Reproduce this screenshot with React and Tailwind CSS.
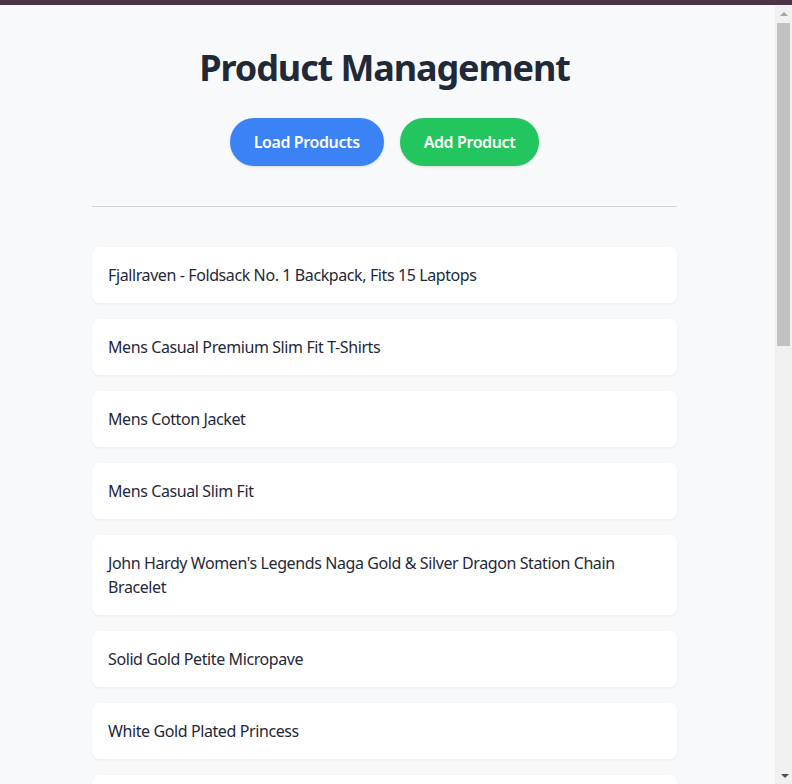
const products = [
  "Fjallraven - Foldsack No. 1 Backpack, Fits 15 Laptops",
  "Mens Casual Premium Slim Fit T-Shirts",
  "Mens Cotton Jacket",
  "Mens Casual Slim Fit",
  "John Hardy Women's Legends Naga Gold & Silver Dragon Station Chain Bracelet",
  "Solid Gold Petite Micropave",
  "White Gold Plated Princess",
  "Pierced Owl Rose Gold Plated Stainless Steel Double",
  "WD 2TB Elements Portable External Hard Drive - USB 3.0",
  "SanDisk SSD PLUS 1TB Internal SSD - SATA III 6 Gb/s",
  "Silicon Power 256GB SSD 3D NAND A55 SLC Cache Performance Boost SATA III 2.5",
  "WD 4TB Gaming Drive Works with Playstation 4 Portable External Hard Drive",
  "Acer SB220Q bi 21.5 inches Full HD (1920 x 1080) IPS Ultra-Thin",
  "Samsung 49-Inch CHG90 144Hz Curved Gaming Monitor (LC49HG90DMNXZA) – Super Ultrawide Screen QLED",
  "BIYLACLESEN Women's 3-in-1 Snowboard Jacket Winter Coats",
  "Lock and Love Women's Removable Hooded Faux Leather Moto Biker Jacket",
  "Rain Jacket Women Windbreaker Striped Climbing Raincoats",
  "MBJ Women's Solid Short Sleeve Boat Neck V",
  "Opna Women's Short Sleeve Moisture",
  "DANVOUE Womens T Shirt Casual Cotton Short",
];

// classic scrollbar look, the headless browser hides its own
function Scrollbar() {
  return (
    <div className="flex w-[17px] shrink-0 flex-col bg-[#f1f1f1]">
      <div className="flex h-[17px] items-center justify-center pl-px">
        <div className="h-0 w-0 border-x-4 border-b-4 border-x-transparent border-b-[#a3a3a3]" />
      </div>
      <div className="ml-[2px] mt-px h-[323px] w-[13px] bg-[#c1c1c1]" />
      <div className="flex-1" />
      <div className="flex h-[17px] items-center justify-center pl-[2px]">
        <div className="h-0 w-0 border-x-4 border-t-4 border-x-transparent border-t-[#505050]" />
      </div>
    </div>
  );
}

export default function App() {
  return (
    <div className="flex h-screen flex-col bg-[#f8f9fb] text-[#1f2937] font-['Noto_Sans',sans-serif] tracking-[-0.4px]">
      <div className="h-[5px] shrink-0 bg-[#4a3446]" />
      <div className="flex min-h-0 flex-1">
        <div className="flex-1 overflow-hidden">
          <div className="ml-[92px] w-[585px] pt-[43px] pb-10">
            <h1 className="text-center text-4xl font-bold leading-10 tracking-[-1.1px]">Product Management</h1>

            <div className="mt-[30px] flex justify-center gap-4">
              <button className="h-12 rounded-full bg-[#3b82f6] px-6 font-semibold text-white shadow-sm">
                Load Products
              </button>
              <button className="h-12 rounded-full bg-[#22c55e] px-6 font-semibold text-white shadow-sm">
                Add Product
              </button>
            </div>

            <hr className="mt-10 border-t border-[#d1d5db]" />

            <ul className="mt-10 flex flex-col gap-4">
              {products.map((title) => (
                <li key={title} className="rounded-lg bg-white p-4 text-base leading-6 shadow-[0_1px_3px_rgba(0,0,0,0.06)]">
                  {title}
                </li>
              ))}
            </ul>
          </div>
        </div>
        <Scrollbar />
      </div>
    </div>
  );
}
